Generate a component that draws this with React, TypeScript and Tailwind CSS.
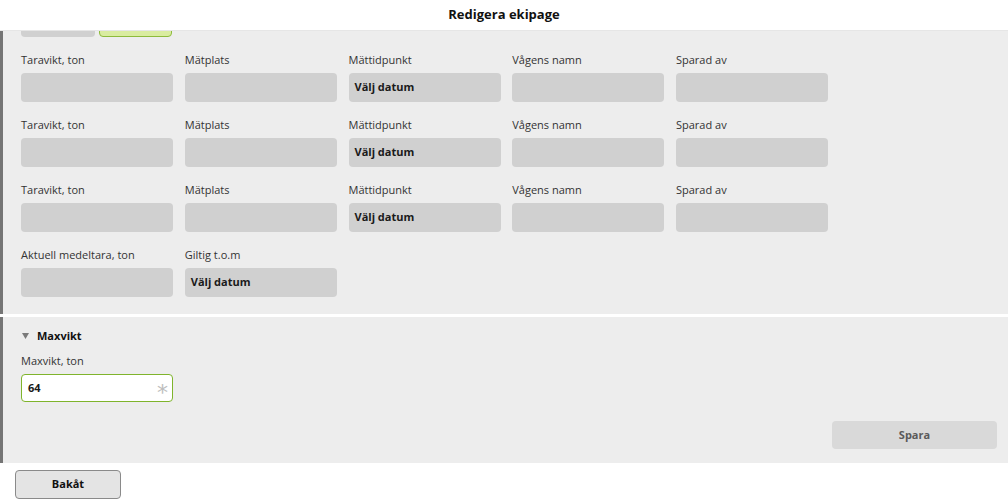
import React from "react";

const font = { fontFamily: '"Open Sans", "Noto Sans", sans-serif' };

function Field({ label, date }: { label: string; date?: boolean }) {
  return (
    <div className="w-[152px] flex flex-col">
      <div className="h-[16px] text-[11px] leading-[16px] text-[#333] whitespace-nowrap">{label}</div>
      <div className="mt-[5px] h-[29px] rounded-[4px] bg-[#d0d0d0] flex items-center px-[6px]">
        {date && <span className="text-[11px] font-bold text-[#1a1a1a]">Välj datum</span>}
      </div>
    </div>
  );
}

function Row({ fields }: { fields: { label: string; date?: boolean }[] }) {
  return (
    <div className="flex gap-[11.75px] mb-[15px]">
      {fields.map((f, i) => (
        <Field key={i} label={f.label} date={f.date} />
      ))}
    </div>
  );
}

const tara = [
  { label: "Taravikt, ton" },
  { label: "Mätplats" },
  { label: "Mättidpunkt", date: true },
  { label: "Vågens namn" },
  { label: "Sparad av" },
];

export default function App() {
  return (
    <div className="w-[1008px] h-[504px] bg-white overflow-hidden flex flex-col" style={font}>
      <div className="h-[31px] shrink-0 flex items-center justify-center border-b border-[#e6e6e6] bg-white">
        <span className="text-[13px] font-bold text-[#111]">Redigera ekipage</span>
      </div>
      <div className="h-[283px] shrink-0 bg-[#ededed] border-l-[3px] border-[#757575] pl-[18px] overflow-hidden">
        <div className="h-[6px] overflow-hidden flex gap-[4px] mb-[15px]">
          <div className="w-[74px] h-[29px] -mt-[23px] rounded-[4px] bg-[#d0d0d0]" />
          <div className="w-[73px] h-[29px] -mt-[23px] rounded-[4px] bg-[#d9eca0] border border-[#8dbb3c]" />
        </div>
        <Row fields={tara} />
        <Row fields={tara} />
        <Row fields={tara} />
        <Row fields={[{ label: "Aktuell medeltara, ton" }, { label: "Giltig t.o.m", date: true }]} />
      </div>
      <div className="h-[3px] shrink-0 bg-white" />
      <div className="h-[146px] shrink-0 bg-[#ededed] border-l-[3px] border-[#757575] pl-[18px] pr-[11px] pt-[11px] flex flex-col">
        <div className="h-[16px] flex items-center">
          <svg width="7" height="6" viewBox="0 0 7 6" className="ml-[1px]">
            <path d="M0 0 L7 0 L3.5 6 Z" fill="#7a7a7a" />
          </svg>
          <span className="ml-[8px] text-[11px] font-bold text-[#111] leading-[16px]">Maxvikt</span>
        </div>
        <div className="mt-[9px] h-[16px] text-[11px] leading-[16px] text-[#333]">Maxvikt, ton</div>
        <div className="mt-[5px] w-[152px] h-[28px] rounded-[4px] bg-white border border-[#7fb42c] flex items-center justify-between pl-[6px] pr-[4px]">
          <span className="text-[11px] font-bold text-[#1a1a1a]">64</span>
          <span className="text-[22px] leading-none text-[#bdbdbd] mt-[9px]" style={{ fontFamily: '"DejaVu Sans", sans-serif' }}>*</span>
        </div>
        <div className="mt-[19px] flex justify-end">
          <button className="w-[165px] h-[28px] rounded-[4px] bg-[#d9d9d9] text-[11px] font-bold text-[#5a5a5a]">
            Spara
          </button>
        </div>
      </div>
      <div className="pl-[15px] pt-[7px]">
        <button className="w-[106px] h-[29px] rounded-[4px] bg-[#e4e4e4] border border-[#8a8a8a] text-[11px] font-bold text-[#111]">
          Bakåt
        </button>
      </div>
    </div>
  );
}
